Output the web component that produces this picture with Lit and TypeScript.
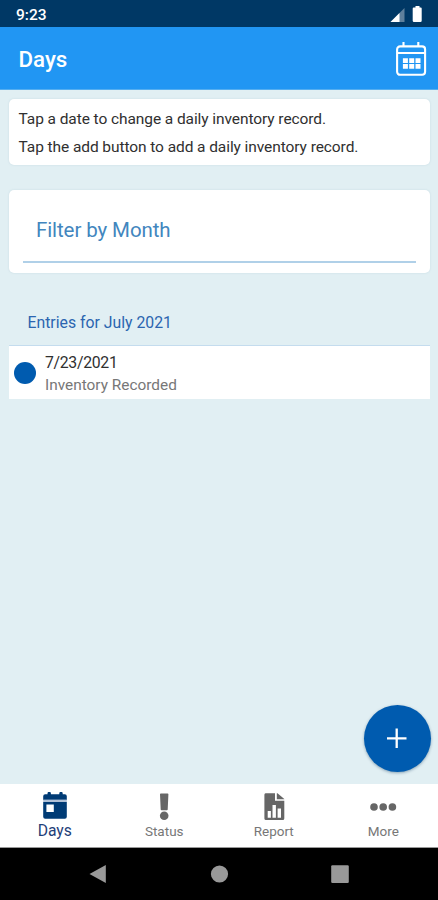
import { LitElement, html, svg, css } from "lit";
import { customElement, state } from "lit/decorators.js";
import { classMap } from "lit/directives/class-map.js";

const tabs = [
  {
    id: "days",
    label: "Days",
    icon: svg`<path d="M11.5 2.6V1.8a1.7 1.7 0 0 1 3.4 0v.8h8.4V1.8a1.7 1.7 0 0 1 3.4 0v.8h2.1a2 2 0 0 1 2 2V8.3H7.2V4.6a2 2 0 0 1 2-2z" transform="translate(0 -.3)"/>
      <path fill-rule="evenodd" d="M7.2 10H30.8V24.7a2 2 0 0 1-2 2H9.2a2 2 0 0 1-2-2zM10.4 12.6v7.4h7.4v-7.4z"/>
      <path class="pale" d="M7.2 7.6h23.6v2.4H7.2z"/>`,
  },
  {
    id: "status",
    label: "Status",
    icon: svg`<path d="M15 2.2q0-.8.8-.8h6.8q.8 0 .8.8l-.7 15.3q0 .8-.8.8h-5.4q-.8 0-.8-.8z"/><circle cx="19.2" cy="23.8" r="4.3"/>`,
  },
  {
    id: "report",
    label: "Report",
    icon: svg`<path fill-rule="evenodd" d="M10.5 1.3H20V8.8h9.3V26.4q0 1.6-1.6 1.6H11q-1.6 0-1.6-1.6V2.8q0-1.5 1.1-1.5zM12.7 19.1v6.7h3.2v-6.7zM17.5 13v12.8h3.4V13zM22.6 16.6v9.2H26v-9.2z"/><path d="M21.8 1.3h.7l6.8 5.6v.4h-7.5z"/>`,
  },
  {
    id: "more",
    label: "More",
    icon: svg`<circle cx="10" cy="15" r="3.8"/><circle cx="19.2" cy="15" r="3.8"/><circle cx="28.4" cy="15" r="3.8"/>`,
  },
];

const entries = [{ date: "7/23/2021", note: "Inventory Recorded" }];

@customElement("app-root")
export class AppRoot extends LitElement {
  @state() private active = "days";

  static styles = css`
    :host {
      display: flex;
      flex-direction: column;
      position: relative;
      width: 438px;
      height: 900px;
      overflow: hidden;
      background: #e1eff3;
      font-family: Roboto, "Liberation Sans", sans-serif;
    }
    * { box-sizing: border-box; }
    svg { display: block; }
    .status {
      height: 27px;
      flex: none;
      display: flex;
      align-items: center;
      justify-content: space-between;
      padding: 2px 14px 0 16px;
      background: #003865;
      color: #fff;
      font-size: 15.5px;
      font-weight: 500;
      line-height: 24px;
    }
    .status svg { margin-top: -2px; }
    .header {
      height: 63px;
      flex: none;
      display: flex;
      align-items: center;
      justify-content: space-between;
      padding: 2px 10px 0 18.5px;
      background: #2196f3;
      border-bottom: 1px solid #55aef0;
      color: #fff;
    }
    .title {
      margin: 0;
      font-size: 22.3px;
      font-weight: 500;
      line-height: 30px;
    }
    .content {
      flex: 1;
      padding: 9px 8.5px 0 9px;
    }
    .card {
      background: #fff;
      border-radius: 5px;
      box-shadow: 0 0 2px rgba(130, 170, 185, .3);
    }
    .tips {
      height: 66px;
      padding: 6px 9.5px;
      font-size: 15.5px;
      letter-spacing: -.08px;
      line-height: 28px;
      color: #303030;
      white-space: nowrap;
    }
    .filter {
      height: 83px;
      margin-top: 24.5px;
      padding: 20px 13.5px 0 14px;
    }
    .field {
      height: 53px;
      padding-left: 13px;
      border-bottom: 2px solid #b0d0e8;
      font-size: 20.5px;
      letter-spacing: -.1px;
      line-height: 41px;
      color: #4286be;
    }
    .group {
      margin: 0;
      padding: 40.5px 18.5px 13px;
      font-size: 15.8px;
      line-height: 19px;
      font-weight: 400;
      color: #2b65b0;
    }
    .entry {
      height: 53.5px;
      display: flex;
      align-items: center;
      gap: 9px;
      padding: 1.5px 0 0 5px;
      background: #fff;
      border-top: 1px solid #c4dcee;
    }
    .dot {
      width: 22px;
      height: 22px;
      border-radius: 50%;
      background: #005baf;
    }
    .lines { padding-top: 2px; }
    .date { font-size: 15.8px; letter-spacing: -.3px; line-height: 22px; color: #303030; }
    .note { font-size: 15.4px; line-height: 22px; color: #777; }
    .add {
      position: absolute;
      left: 364px;
      top: 705px;
      width: 67px;
      height: 67px;
      padding: 0;
      border: 0;
      border-radius: 50%;
      display: grid;
      place-items: center;
      background: #005baf;
      box-shadow: 0 1px 3px rgba(0, 50, 90, .4);
    }
    .tabs {
      height: 64px;
      flex: none;
      display: grid;
      grid-template-columns: repeat(4, 1fr);
      background: #fff;
      border-bottom: 1px solid #999;
    }
    .tab {
      padding: 8px 0 0;
      border: 0;
      background: none;
      display: flex;
      flex-direction: column;
      align-items: center;
      font: 400 13.5px/18px Roboto, "Liberation Sans", sans-serif;
      color: #777;
    }
    .tab svg { fill: #666; }
    .tab.on { color: #1e4078; font-size: 15.7px; line-height: 17px; }
    .tab.on svg { fill: #003b75; }
    .tab svg .pale { fill: #b0c0d6; }
    .nav {
      height: 52px;
      flex: none;
      background: #000;
    }
  `;

  render() {
    return html`
      <div class="status">
        <span>9:23</span>
        <svg width="34" height="18" viewBox="0 0 34 18">
          <path d="M.5 17 14.5 3V17z" fill="#5f809c" />
          <path d="M.5 17 9.5 8V17z" fill="#fff" />
          <path d="M22.7 3.4q0-1 1-1h1.8V1h4v1.4h1.2q1 0 1 1V15.7q0 1.3-1.3 1.3h-6.4q-1.3 0-1.3-1.3z" fill="#fff" />
        </svg>
      </div>
      <header class="header">
        <h1 class="title">Days</h1>
        <svg width="34" height="38" viewBox="0 0 34 38" fill="none" stroke="#fff">
          <rect x="3.1" y="6.4" width="28" height="28.4" rx="3" stroke-width="2.1" />
          <path d="M3.5 13h27.2M9.5 2v4.2M24.3 2v4.2" stroke-width="2.1" />
          <path d="M8.9 20.6h17.6M8.9 26.4h17.6" stroke-width="4.8" stroke-dasharray="5 1.3" />
        </svg>
      </header>
      <main class="content">
        <div class="card tips">
          <div>Tap a date to change a daily inventory record.</div>
          <div>Tap the add button to add a daily inventory record.</div>
        </div>
        <div class="card filter"><div class="field">Filter by Month</div></div>
        <h2 class="group">Entries for July 2021</h2>
        ${entries.map(
          (e) => html`<div class="entry">
            <span class="dot"></span>
            <div class="lines">
              <div class="date">${e.date}</div>
              <div class="note">${e.note}</div>
            </div>
          </div>`
        )}
      </main>
      <button class="add" aria-label="Add">
        <svg width="21" height="21" viewBox="0 0 21 21" stroke="#fff" stroke-width="2.3">
          <path d="M0 10.3h19.5M9.7 .5v19.5" />
        </svg>
      </button>
      <div class="tabs">
        ${tabs.map(
          (t) => html`<button
            class=${classMap({ tab: true, on: t.id === this.active })}
            @click=${() => (this.active = t.id)}
          >
            <svg width="38" height="30" viewBox="0 0 38 30">${t.icon}</svg>
            <span>${t.label}</span>
          </button>`
        )}
      </div>
      <div class="nav">
        <svg width="438" height="52" viewBox="0 0 438 52" fill="#999">
          <path d="M89.5 26 105.8 17V35z" />
          <circle cx="219.5" cy="26" r="8.6" />
          <rect x="331.2" y="17.3" width="17.6" height="17.6" rx="1.2" />
        </svg>
      </div>
    `;
  }
}
